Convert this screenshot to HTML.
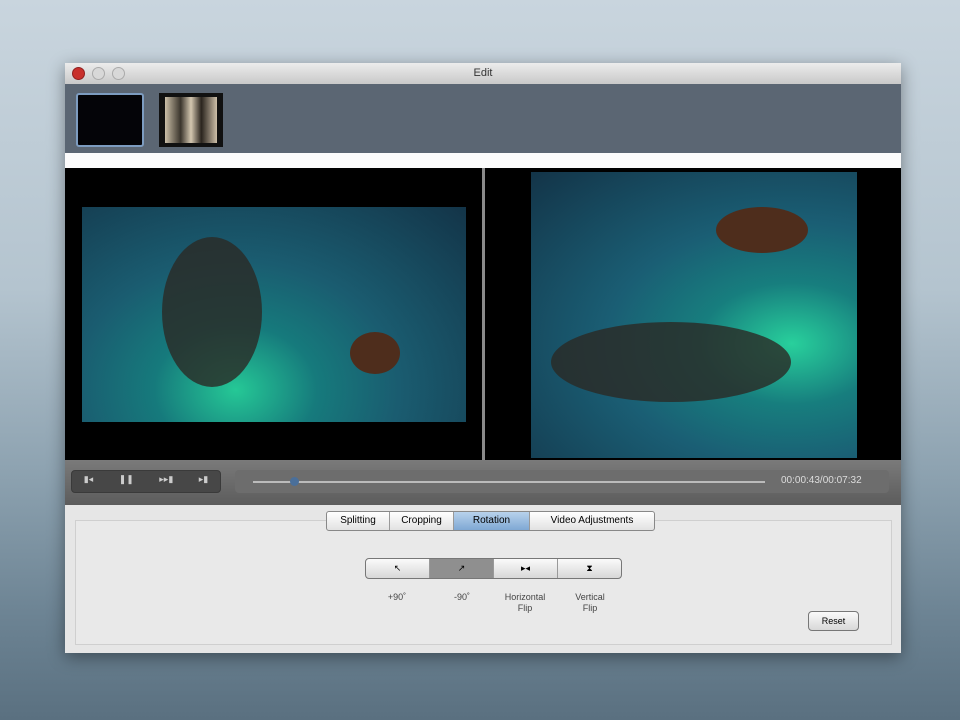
<!DOCTYPE html>
<html><head><meta charset="utf-8"><style>
*{margin:0;padding:0;box-sizing:border-box}
body{width:960px;height:720px;overflow:hidden;position:relative;font-family:"Liberation Sans",sans-serif;
background:linear-gradient(180deg,#c9d5de 0%,#b4c4cf 40%,#8ea3b1 65%,#6d8494 85%,#5a7080 100%)}
.abs{position:absolute}
.win{left:65px;top:63px;width:836px;height:590px;background:#e6e6e6;box-shadow:0 4px 16px rgba(0,0,0,.4)}
.title{left:0;top:0;width:836px;height:21px;background:linear-gradient(#ececec,#c9c9c9);font-size:11px;color:#333;text-align:center;line-height:21px}
.dot{top:4px;width:13px;height:13px;border-radius:50%;background:#d8d8d8;border:1px solid #aaa}
.strip{left:0;top:21px;width:836px;height:69px;background:#5b6673}
.lbl{font-size:9px;color:#444;text-align:center;line-height:11px}
</style></head><body>
<div class="abs win">
 <div class="abs title">Edit</div>
 <div class="abs dot" style="left:7px;background:#c8302c;border-color:#902020"></div>
 <div class="abs dot" style="left:27px"></div>
 <div class="abs dot" style="left:47px"></div>
 <div class="abs strip">
  <div class="abs" style="left:11px;top:9px;width:68px;height:54px;background:#040408;border:2px solid #7d9cc0;border-radius:3px"></div>
  <div class="abs" style="left:94px;top:9px;width:64px;height:54px;background:#111;padding:4px 6px"><div style="width:100%;height:100%;background:linear-gradient(90deg,#cbbfa8,#3a342c 30%,#d4c7b0 50%,#2a241e 70%,#cdbfa8)"></div></div>
 </div>
 <div class="abs" style="left:0;top:90px;width:836px;height:15px;background:#fbfbfb"></div>
 <div class="abs" style="left:0;top:105px;width:836px;height:292px;background:#000"></div>
 <div class="abs" style="left:17px;top:144px;width:384px;height:215px;background:radial-gradient(ellipse at 40% 85%,#25c896 0%,#167a7c 25%,#1a5c70 50%,#133448 100%)">
  <div class="abs" style="left:80px;top:30px;width:100px;height:150px;border-radius:50%;background:#2a2924;opacity:.8"></div>
  <div class="abs" style="left:268px;top:125px;width:50px;height:42px;border-radius:50%;background:#4e2d1c"></div>
 </div>
 <div class="abs" style="left:417px;top:105px;width:3px;height:292px;background:#8a8a8a"></div>
 <div class="abs" style="left:466px;top:109px;width:326px;height:286px;background:radial-gradient(ellipse at 80% 60%,#28d09c 0%,#177e7e 25%,#1a5e74 50%,#133448 100%)">
  <div class="abs" style="left:20px;top:150px;width:240px;height:80px;border-radius:50%;background:#2a2924;opacity:.8"></div>
  <div class="abs" style="left:185px;top:35px;width:92px;height:46px;border-radius:50%;background:#4e2d1c"></div>
 </div>
 <div class="abs" style="left:0;top:397px;width:836px;height:45px;background:linear-gradient(#7a7a7a,#5c5c5c)">
  <div class="abs" style="left:6px;top:10px;width:150px;height:23px;background:#474747;border-radius:4px;border:1px solid #3a3a3a"></div>
  <div class="abs" style="left:6px;top:14px;width:150px;font-size:9px;color:#ccc;display:flex;justify-content:space-around">▮◂<span>❚❚</span><span>▸▸▮</span><span>▸▮</span></div>
  <div class="abs" style="left:170px;top:10px;width:654px;height:23px;background:#6d6d6d;border-radius:4px"></div>
  <div class="abs" style="left:188px;top:21px;width:512px;height:2px;background:#bbb"></div>
  <div class="abs" style="left:225px;top:17px;width:9px;height:9px;border-radius:50%;background:#4a6f9a"></div>
  <div class="abs" style="left:716px;top:15px;font-size:10px;color:#ddd">00:00:43/00:07:32</div>
 </div>
 <div class="abs" style="left:10px;top:457px;width:817px;height:125px;border:1px solid #cfcfcf;background:#e9e9e9"></div>
 <div class="abs" style="left:261px;top:448px;height:20px;display:flex;font-size:10px;border:1px solid #888;border-radius:3px;overflow:hidden;background:linear-gradient(#fff,#e2e2e2)">
  <div style="width:63px;text-align:center;line-height:18px;border-right:1px solid #999">Splitting</div>
  <div style="width:64px;text-align:center;line-height:18px;border-right:1px solid #999">Cropping</div>
  <div style="width:76px;text-align:center;line-height:18px;background:linear-gradient(#b8d2ec,#7fa8d4);border-right:1px solid #999">Rotation</div>
  <div style="width:124px;text-align:center;line-height:18px">Video Adjustments</div>
 </div>
 <div class="abs" style="left:300px;top:495px;width:257px;height:21px;display:flex;border:1px solid #777;border-radius:4px;overflow:hidden;background:linear-gradient(#fafafa,#d8d8d8);font-size:9px">
  <div style="width:64px;text-align:center;line-height:19px;border-right:1px solid #999">↖</div>
  <div style="width:64px;text-align:center;line-height:19px;border-right:1px solid #999;background:#8f8f8f">↗</div>
  <div style="width:64px;text-align:center;line-height:19px;border-right:1px solid #999">▸◂</div>
  <div style="width:63px;text-align:center;line-height:19px">⧗</div>
 </div>
 <div class="abs lbl" style="left:305px;top:529px;width:54px">+90˚</div>
 <div class="abs lbl" style="left:370px;top:529px;width:54px">-90˚</div>
 <div class="abs lbl" style="left:430px;top:529px;width:60px">Horizontal<br>Flip</div>
 <div class="abs lbl" style="left:496px;top:529px;width:58px">Vertical<br>Flip</div>
 <div class="abs" style="left:743px;top:548px;width:51px;height:20px;border:1px solid #777;border-radius:4px;background:linear-gradient(#fafafa,#d8d8d8);font-size:9px;text-align:center;line-height:18px">Reset</div>
</div>
</body></html>
